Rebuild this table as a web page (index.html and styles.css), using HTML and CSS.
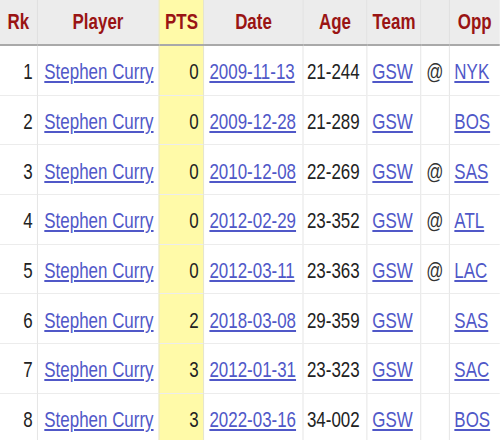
FILE: index.html
```html
<!DOCTYPE html>
<html>
<head>
<meta charset="utf-8">
<link rel="stylesheet" href="styles.css">
</head>
<body>
<div class="frame">
<table class="stats">
  <colgroup>
    <col class="c-rk"><col class="c-player"><col class="c-pts"><col class="c-date"><col class="c-age"><col class="c-team"><col class="c-loc"><col class="c-opp">
  </colgroup>
  <thead>
    <tr>
      <th>Rk</th><th>Player</th><th class="pts">PTS</th><th>Date</th><th>Age</th><th>Team</th><th></th><th>Opp</th>
    </tr>
  </thead>
  <tbody>
    <tr><td class="rk">1</td><td class="player"><a href="#">Stephen Curry</a></td><td class="pts">0</td><td class="date"><a href="#">2009-11-13</a></td><td class="age">21-244</td><td class="team"><a href="#">GSW</a></td><td class="loc">@</td><td class="opp"><a href="#">NYK</a></td></tr>
    <tr><td class="rk">2</td><td class="player"><a href="#">Stephen Curry</a></td><td class="pts">0</td><td class="date"><a href="#">2009-12-28</a></td><td class="age">21-289</td><td class="team"><a href="#">GSW</a></td><td class="loc"></td><td class="opp"><a href="#">BOS</a></td></tr>
    <tr><td class="rk">3</td><td class="player"><a href="#">Stephen Curry</a></td><td class="pts">0</td><td class="date"><a href="#">2010-12-08</a></td><td class="age">22-269</td><td class="team"><a href="#">GSW</a></td><td class="loc">@</td><td class="opp"><a href="#">SAS</a></td></tr>
    <tr><td class="rk">4</td><td class="player"><a href="#">Stephen Curry</a></td><td class="pts">0</td><td class="date"><a href="#">2012-02-29</a></td><td class="age">23-352</td><td class="team"><a href="#">GSW</a></td><td class="loc">@</td><td class="opp"><a href="#">ATL</a></td></tr>
    <tr><td class="rk">5</td><td class="player"><a href="#">Stephen Curry</a></td><td class="pts">0</td><td class="date"><a href="#">2012-03-11</a></td><td class="age">23-363</td><td class="team"><a href="#">GSW</a></td><td class="loc">@</td><td class="opp"><a href="#">LAC</a></td></tr>
    <tr><td class="rk">6</td><td class="player"><a href="#">Stephen Curry</a></td><td class="pts">2</td><td class="date"><a href="#">2018-03-08</a></td><td class="age">29-359</td><td class="team"><a href="#">GSW</a></td><td class="loc"></td><td class="opp"><a href="#">SAS</a></td></tr>
    <tr><td class="rk">7</td><td class="player"><a href="#">Stephen Curry</a></td><td class="pts">3</td><td class="date"><a href="#">2012-01-31</a></td><td class="age">23-323</td><td class="team"><a href="#">GSW</a></td><td class="loc"></td><td class="opp"><a href="#">SAC</a></td></tr>
    <tr><td class="rk">8</td><td class="player"><a href="#">Stephen Curry</a></td><td class="pts">3</td><td class="date"><a href="#">2022-03-16</a></td><td class="age">34-002</td><td class="team"><a href="#">GSW</a></td><td class="loc"></td><td class="opp"><a href="#">BOS</a></td></tr>
  </tbody>
</table>
</div>
</body>
</html>
```

FILE: styles.css
```css
html, body {
  margin: 0;
  padding: 0;
  background: #ffffff;
  overflow: hidden;
}

.frame {
  width: 500px;
  height: 440px;
  overflow: hidden;
}

/* The table is drawn with a condensed look: laid out at 1/0.77 width, then squeezed horizontally */
.stats {
  width: 649.35px;
  table-layout: fixed;
  border-collapse: collapse;
  transform: scaleX(0.77);
  transform-origin: 0 0;
  font-family: "Liberation Sans", Arial, sans-serif;
  font-size: 22px;
  color: #222222;
}

.c-rk { width: 48.05px; }
.c-player { width: 158.44px; }
.c-pts { width: 58.44px; }
.c-date { width: 128.57px; }
.c-age { width: 83.12px; }
.c-team { width: 70.13px; }
.c-loc { width: 36.36px; }
.c-opp { width: 66.24px; }

.stats th {
  height: 44px;
  padding: 0;
  background: #ececec;
  color: #9a1414;
  font-weight: bold;
  text-align: center;
  border-left: 1px solid #dcdcdc;
  border-bottom: 2px solid #a9a9a9;
}

.stats th:first-child,
.stats td:first-child {
  border-left: none;
}

.stats td {
  height: 44.7px;
  padding: 4px 0 0 0;
  white-space: nowrap;
  border-left: 1px solid #dddddd;
  border-top: 1px solid #ececec;
}

.stats tbody tr:first-child td {
  border-top: none;
}

.stats td.rk { text-align: right; padding-right: 5.2px; }
.stats td.player { text-align: left; padding-left: 9px; }
.stats td.pts { text-align: right; padding-right: 6.5px; }
.stats td.date { text-align: left; padding-left: 6.5px; }
.stats td.age { text-align: right; padding-right: 9px; }
.stats td.team { text-align: left; padding-left: 6.5px; }
.stats td.loc { text-align: center; color: #333333; }
.stats td.opp { text-align: left; padding-left: 6.5px; }

.stats th.pts,
.stats td.pts {
  background: #fffaa8;
}

.stats a {
  color: #5058c8;
  text-decoration: underline;
  text-underline-offset: 2px;
}
```
